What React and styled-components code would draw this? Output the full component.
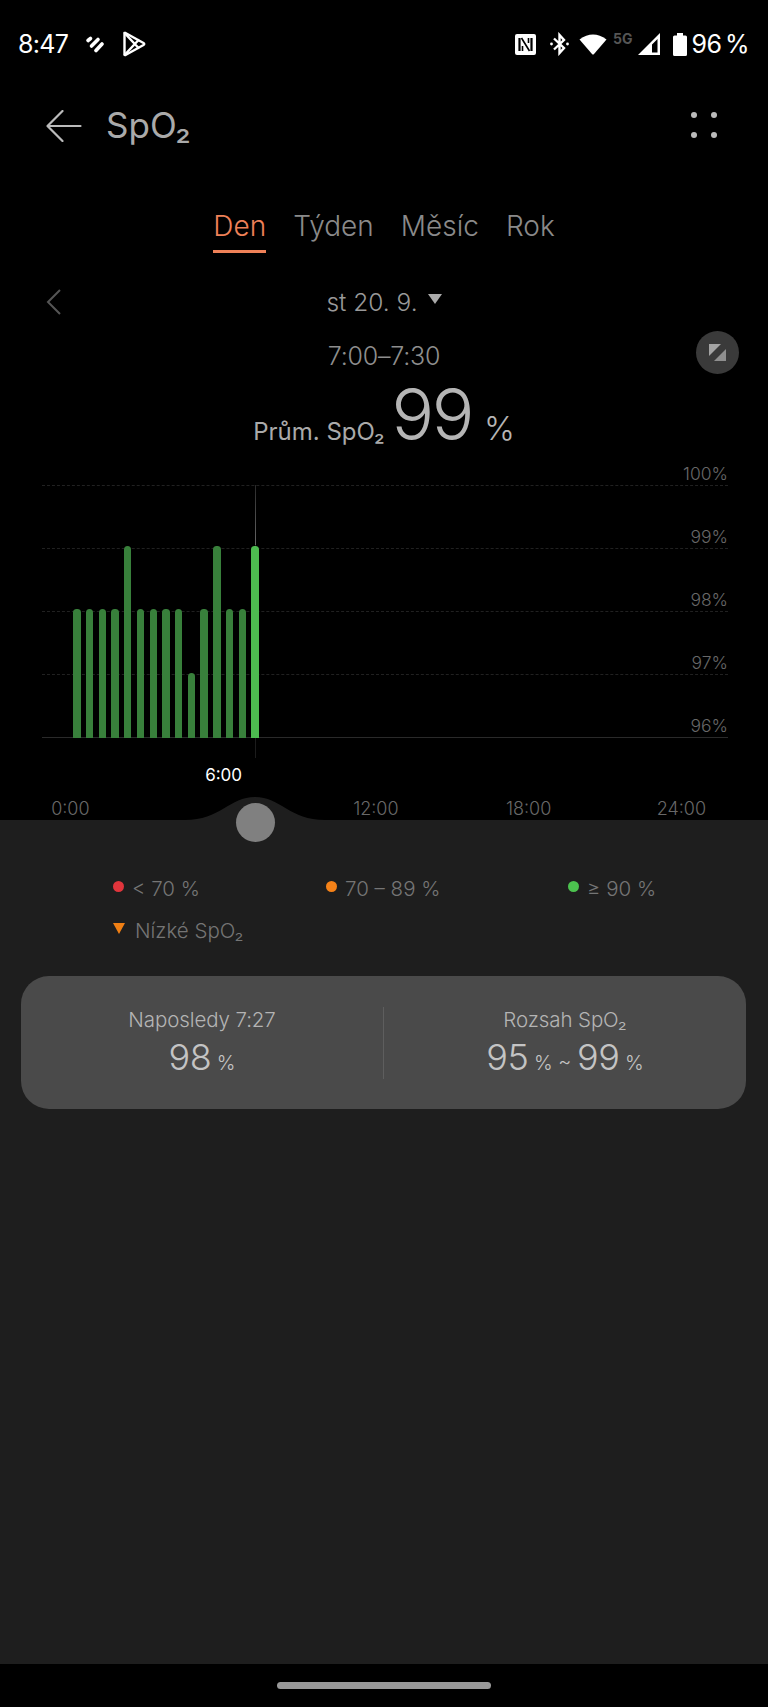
import React from 'react'
import styled, { createGlobalStyle } from 'styled-components'

const GlobalStyle = createGlobalStyle`
  html, body {
    margin: 0;
    padding: 0;
    background: #000;
  }
  * {
    box-sizing: border-box;
  }
`

const Page = styled.div`
  width: 768px;
  height: 1707px;
  display: flex;
  flex-direction: column;
  overflow: hidden;
  background: #000;
  font-family: Inter, "Open Sans", sans-serif;
  font-weight: 300;
  color: #aaa;
`

const StatusBar = styled.div`
  height: 88px;
  padding: 0 19px 0 18px;
  display: flex;
  align-items: center;
  color: #fff;
  font-size: 25px;
  font-weight: 400;
  letter-spacing: -0.7px;
`

const StatusLeft = styled.div`
  display: flex;
  align-items: center;
  flex: 1;
`

const StatusRight = styled.div`
  display: flex;
  align-items: center;
`

const StatusIcon = styled.svg`
  display: block;
  flex: none;
  margin-left: ${p => p.$gap || 0}px;
`

const NetworkLabel = styled.span`
  font-size: 14px;
  font-weight: 700;
  letter-spacing: 0;
  color: #555;
  margin: -11px 0 0 6px;
`

const BatteryText = styled.span`
  margin-left: 4px;
  white-space: nowrap;
  letter-spacing: -0.5px;
  word-spacing: -3px;
`

const Header = styled.div`
  height: 76px;
  padding: 0 46px;
  display: flex;
  align-items: center;
`

const Title = styled.h1`
  margin: -2px 0 0 24px;
  font-size: 35px;
  font-weight: 400;
  color: #aaa;
  flex: 1;
`

const MenuDots = styled.div`
  display: grid;
  grid-template-columns: 6px 6px;
  grid-auto-rows: 6px;
  gap: 14px;
  margin-right: 5px;
  margin-top: -3px;

  span {
    border-radius: 50%;
    background: #bbb;
  }
`

const Tabs = styled.div`
  margin-top: 45px;
  display: flex;
  justify-content: center;
  gap: 27px;
`

const Tab = styled.div`
  height: 44px;
  padding-bottom: 7px;
  line-height: 34px;
  font-size: 28px;
  color: ${p => (p.$active ? '#ef8158' : '#8a8a8a')};
  border-bottom: 3px solid ${p => (p.$active ? '#ef8158' : 'transparent')};
`

const DateRow = styled.div`
  margin-top: 32px;
  height: 34px;
  padding: 0 46px;
  display: grid;
  grid-template-columns: 1fr auto 1fr;
  align-items: center;
`

const DateLabel = styled.div`
  display: flex;
  align-items: center;
  gap: 10px;
  font-size: 24.5px;
  color: #999;
`

const DateCaret = styled.span`
  width: 0;
  height: 0;
  margin-top: -6px;
  border-left: 7px solid transparent;
  border-right: 7px solid transparent;
  border-top: 10px solid #aaa;
`

const Summary = styled.div`
  position: relative;
  margin-top: 22px;
  height: 122px;
  text-align: center;
`

const RangeText = styled.div`
  height: 30px;
  line-height: 30px;
  font-size: 25px;
  letter-spacing: -0.2px;
  color: #8e8e8e;
`

const ExpandButton = styled.div`
  position: absolute;
  left: 696px;
  top: -10px;
  width: 43px;
  height: 43px;
  border-radius: 50%;
  background: #3a3a3a;
  display: flex;
  align-items: center;
  justify-content: center;
`

const AverageRow = styled.div`
  margin-top: 7px;
  display: flex;
  justify-content: center;
  align-items: baseline;
  line-height: 72px;
  color: #b5b5b5;
`

const AverageLabel = styled.span`
  font-size: 24px;
  font-weight: 400;
  color: #aaa;
`

const AverageValue = styled.span`
  margin-left: 7px;
  font-size: 71px;
  letter-spacing: -2.5px;
`

const AverageUnit = styled.span`
  margin-left: 12px;
  font-size: 33px;
`

const Chart = styled.div`
  position: relative;
  margin-left: 42px;
  width: 686px;
`

const GridRow = styled.div`
  height: ${p => p.$height}px;
  display: flex;
  justify-content: flex-end;
  align-items: flex-end;
  padding-bottom: 1px;
  font-size: 17.5px;
  line-height: 20px;
  color: #686868;
  border-bottom: 1px ${p => (p.$solid ? 'solid #2a2a2a' : 'dashed #212121')};
`

const Bars = styled.div`
  position: absolute;
  left: 31.3px;
  bottom: 0;
  display: flex;
  align-items: flex-end;
  gap: 5.43px;
`

const Bar = styled.div`
  width: 7.3px;
  height: ${p => p.$height}px;
  border-radius: 3.6px 3.6px 0 0;
  background: ${p => (p.$active ? '#4dbb50' : '#38803b')};
`

const Cursor = styled.div`
  position: absolute;
  left: 212.5px;
  top: 22px;
  bottom: -20px;
  width: 1px;
  background: linear-gradient(#2a2a2a, #666 60px, #1c1c1c 60px, #1c1c1c);
`

const Axis = styled.div`
  margin: 23px 0 0 -6px;
  height: 59px;
  display: grid;
  grid-template-columns: repeat(5, 152.75px);
  line-height: 20px;
  text-align: center;
`

const Tick = styled.div`
  align-self: ${p => (p.$selected ? 'start' : 'end')};
  color: ${p => (p.$selected ? '#fff' : '#686868')};
  font-size: ${p => (p.$selected ? 17 : 18)}px;
  font-weight: ${p => (p.$selected ? 400 : 300)};
  padding-bottom: ${p => (p.$selected ? 0 : 1)}px;
  margin-top: ${p => (p.$selected ? 4 : 0)}px;
  margin-left: ${p => (p.$selected ? 1 : 0)}px;
`

const Panel = styled.div`
  position: relative;
  flex: 1;
  background: #1e1e1e;
`

const Bump = styled.svg`
  position: absolute;
  left: 185px;
  top: -23px;
`

const Knob = styled.div`
  position: absolute;
  left: 235.5px;
  top: -17px;
  width: 39px;
  height: 39px;
  border-radius: 50%;
  background: #808080;
`

const Legend = styled.div`
  padding: 47px 0 0 113px;
  display: grid;
  grid-template-columns: 213px 242px auto;
  grid-auto-rows: 42px;
  align-items: center;
  height: 156px;
  align-content: start;
  font-size: 20.5px;
  color: #757575;
`

const LegendItem = styled.div`
  display: flex;
  align-items: center;
  height: 42px;
`

const LegendDot = styled.span`
  width: 11px;
  height: 11px;
  margin: -3px 8px 0 0;
  border-radius: 50%;
  background: ${p => p.$color};
`

const LegendMark = styled.span`
  width: 0;
  height: 0;
  margin: -3px 10px 0 0;
  border-left: 6px solid transparent;
  border-right: 6px solid transparent;
  border-top: 11px solid #f07f14;
`

const StatsCard = styled.div`
  margin: 0 22px 0 21px;
  height: 133px;
  border-radius: 28px;
  background: #4a4a4a;
  display: grid;
  grid-template-columns: 1fr 1px 1fr;
  align-items: center;
`

const Stat = styled.div`
  padding-top: 6px;
  display: flex;
  flex-direction: column;
  align-items: center;
`

const StatLabel = styled.div`
  font-size: 20.5px;
  line-height: 26px;
  letter-spacing: -0.1px;
  color: #b4b4b4;
`

const StatValue = styled.div`
  margin-top: 2px;
  line-height: 44px;
  color: #c4c4c4;
  font-size: 20px;
  white-space: pre;
`

const StatNumber = styled.span`
  font-size: 36px;
  letter-spacing: -0.5px;
`

const CardDivider = styled.div`
  height: 72px;
  background: #5e5e5e;
`

const NavBar = styled.div`
  height: 43px;
  display: flex;
  align-items: center;
  justify-content: center;
`

const NavPill = styled.div`
  width: 214px;
  height: 7px;
  border-radius: 4px;
  background: #999;
`

const barValues = [129, 129, 129, 129, 192, 129, 129, 129, 129, 65, 129, 192, 129, 129, 192]
const gridRows = [
  { label: '100%', height: 23 },
  { label: '99%', height: 63 },
  { label: '98%', height: 63 },
  { label: '97%', height: 63 },
  { label: '96%', height: 63, solid: true },
]
const ticks = ['0:00', '6:00', '12:00', '18:00', '24:00']

const App = () => (
  <Page>
    <GlobalStyle />
    <StatusBar>
      <StatusLeft>
        8:47
        <StatusIcon $gap={17} width="20" height="18" viewBox="0 0 20 18" fill="none" stroke="#fff" strokeWidth="3.6" strokeLinecap="round">
          <path d="M3 5.5 L5.5 3.5" />
          <path d="M6.5 11 L13 4.5" />
          <path d="M11 15.5 L17 9" />
        </StatusIcon>
        <StatusIcon $gap={17} width="24" height="26" viewBox="0 0 24 26" fill="none" stroke="#fff" strokeWidth="2.4" strokeLinejoin="round">
          <path d="M2.5 2.5 Q2 1.5 3.5 2 L21.5 12 Q23 13 21.5 14 L3.5 24 Q2 24.5 2.5 23 Z" />
          <path d="M3 2.5 L17 17.5 M3 23.5 L17 8.5" />
        </StatusIcon>
      </StatusLeft>
      <StatusRight>
        <StatusIcon width="21" height="21" viewBox="0 0 21 21">
          <rect width="21" height="21" rx="2" fill="#fff" />
          <path d="M4.5 4 V17 M16.5 4 V17" fill="none" stroke="#000" strokeWidth="2.2" />
          <path d="M6.5 4 L14.5 17 M7.5 12 V17 M13.5 4 V9" fill="none" stroke="#000" strokeWidth="1.6" />
        </StatusIcon>
        <StatusIcon $gap={14} width="19" height="24" viewBox="0 0 19 24" fill="none" stroke="#fff" strokeWidth="2.4">
          <path d="M4 6.5 L14 16 L9.5 21 V3 L14 8 L4 17.5" />
          <circle cx="1.5" cy="12" r="1.4" fill="#fff" stroke="none" />
          <circle cx="17.5" cy="12" r="1.4" fill="#fff" stroke="none" />
        </StatusIcon>
        <StatusIcon $gap={10} width="28" height="22" viewBox="0 0 28 22">
          <path d="M0.5 6.5 Q14 -3.5 27.5 6.5 L15 21 Q14 22 13 21 Z" fill="#fff" />
        </StatusIcon>
        <NetworkLabel>5G</NetworkLabel>
        <StatusIcon $gap={6} width="22" height="22" viewBox="0 0 22 22">
          <path d="M22 0 V22 H0 Z M19.5 6 L14 11.5 V19.5 H19.5 Z" fill="#fff" fillRule="evenodd" />
        </StatusIcon>
        <StatusIcon $gap={13} width="14" height="23" viewBox="0 0 14 23">
          <path d="M4 0 H10 V2.5 H12.5 Q14 2.5 14 4 V21.5 Q14 23 12.5 23 H1.5 Q0 23 0 21.5 V4 Q0 2.5 1.5 2.5 H4 Z" fill="#fff" />
        </StatusIcon>
        <BatteryText>96 %</BatteryText>
      </StatusRight>
    </StatusBar>

    <Header>
      <svg width="36" height="32" viewBox="0 0 36 32" fill="none" stroke="#bbb" strokeWidth="2.2" strokeLinecap="round" strokeLinejoin="round">
        <path d="M34.5 16 H1.5 M16.5 1 L1.5 16 L16.5 31" />
      </svg>
      <Title>SpO₂</Title>
      <MenuDots>
        <span /><span /><span /><span />
      </MenuDots>
    </Header>

    <Tabs>
      <Tab $active>Den</Tab>
      <Tab>Týden</Tab>
      <Tab>Měsíc</Tab>
      <Tab>Rok</Tab>
    </Tabs>

    <DateRow>
      <svg width="15" height="26" viewBox="0 0 15 26" fill="none" stroke="#555" strokeWidth="2">
        <path d="M14 1 L2 13 L14 25" />
      </svg>
      <DateLabel>
        st 20. 9.
        <DateCaret />
      </DateLabel>
    </DateRow>

    <Summary>
      <RangeText>7:00–7:30</RangeText>
      <ExpandButton>
        <svg width="17" height="17" viewBox="0 0 17 17">
          <path d="M0 0 H12 L0 12 Z" fill="#a4a4a4" />
          <path d="M17 17 H5 L17 5 Z" fill="#8f8f8f" />
        </svg>
      </ExpandButton>
      <AverageRow>
        <AverageLabel>Prům. SpO₂</AverageLabel>
        <AverageValue>99</AverageValue>
        <AverageUnit>%</AverageUnit>
      </AverageRow>
    </Summary>

    <Chart>
      {gridRows.map(row => (
        <GridRow key={row.label} $height={row.height} $solid={row.solid}>{row.label}</GridRow>
      ))}
      <Cursor />
      <Bars>
        {barValues.map((value, index) => (
          <Bar key={index} $height={value} $active={index === barValues.length - 1} />
        ))}
      </Bars>
    </Chart>

    <Axis>
      {ticks.map(tick => (
        <Tick key={tick} $selected={tick === '6:00'}>{tick}</Tick>
      ))}
    </Axis>

    <Panel>
      <Bump width="140" height="23" viewBox="0 0 140 23">
        <path d="M0 23 C35 23 45 0 70 0 C95 0 105 23 140 23 Z" fill="#1e1e1e" />
      </Bump>
      <Knob />
      <Legend>
        <LegendItem><LegendDot $color="#e0353c" />&lt; 70 %</LegendItem>
        <LegendItem><LegendDot $color="#f58218" />70 – 89 %</LegendItem>
        <LegendItem><LegendDot $color="#4cc24f" />≥ 90 %</LegendItem>
        <LegendItem><LegendMark />Nízké SpO₂</LegendItem>
      </Legend>
      <StatsCard>
        <Stat>
          <StatLabel>Naposledy 7:27</StatLabel>
          <StatValue><StatNumber>98</StatNumber> %</StatValue>
        </Stat>
        <CardDivider />
        <Stat>
          <StatLabel>Rozsah SpO₂</StatLabel>
          <StatValue><StatNumber>95</StatNumber> % ~ <StatNumber>99</StatNumber> %</StatValue>
        </Stat>
      </StatsCard>
    </Panel>

    <NavBar>
      <NavPill />
    </NavBar>
  </Page>
)

export default App
